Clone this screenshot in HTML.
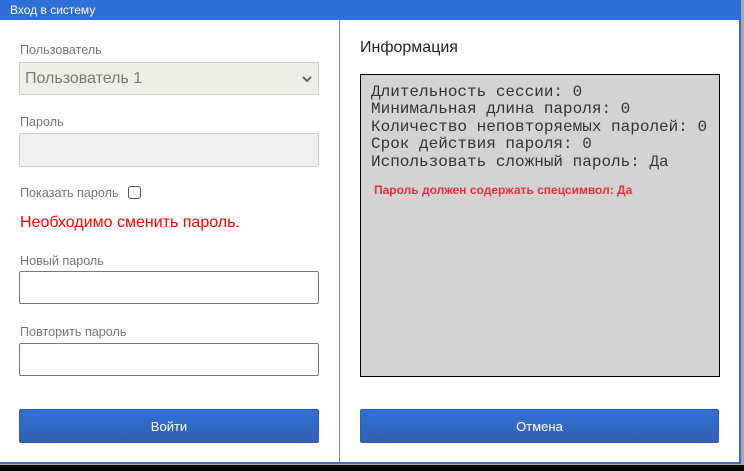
<!DOCTYPE html>
<html><head><meta charset="utf-8"><style>
*{margin:0;padding:0;box-sizing:border-box}
body{width:744px;height:471px;background:#000;position:relative;overflow:hidden;font-family:"Liberation Sans",sans-serif}
.gray{position:absolute;left:0;top:0;width:744px;height:465px;background:#a9a9b0}
.win{position:absolute;left:0;top:0;width:741px;height:464px;background:#fff;border-right:2px solid #2f6fd3;border-bottom:2px solid #3a6ec4}
.hdr{position:absolute;left:0;top:0;width:741px;height:20px;background:#2d6fd6;color:#fff;font-size:12px;line-height:20px;padding-left:10px}
.div{position:absolute;left:339px;top:20px;width:1px;height:442px;background:#888}
.a{position:absolute}
.lbl{font-size:12.6px;color:#777}
.inp{position:absolute;left:19px;width:300px;height:33px;border:1px solid #777;border-radius:2px;background:#fff}
.btn{position:absolute;height:34px;border-radius:2px;background:linear-gradient(#2f70d6,#3460b0);color:#fff;font-size:13px;text-align:center;line-height:34px;border:1px solid #2d5fb8}
.box{position:absolute;left:360px;top:74px;width:360px;height:303px;background:#d3d3d3;border:1px solid #000;padding:9px 0 0 10px}
.mono{font-family:"Liberation Mono",monospace;font-size:16px;line-height:17.4px;color:#333;white-space:pre;letter-spacing:0}
</style></head><body>
<div class="gray"></div>
<div class="win"></div>
<div class="hdr">Вход в систему</div>
<div class="div"></div>
<div class="a lbl" style="left:20px;top:43px">Пользователь</div>
<div class="a" style="left:19px;top:62px;width:300px;height:33px;background:#efefea;border:1px solid #ccc;font-size:16px;color:#777;line-height:31px;padding-left:5px">Пользователь 1
<svg style="position:absolute;right:6px;top:12px" width="10" height="8" viewBox="0 0 10 8"><path d="M1 2l4 4 4-4" stroke="#666" stroke-width="2" fill="none"/></svg></div>
<div class="a lbl" style="left:20px;top:115px">Пароль</div>
<div class="a" style="left:19px;top:133px;width:300px;height:34px;background:#f0f0f0;border:1px solid #ccc;border-radius:2px"></div>
<div class="a lbl" style="left:20px;top:186px">Показать пароль</div>
<div class="a" style="left:128px;top:186px;width:13px;height:13px;border:1px solid #555;border-radius:3px"></div>
<div class="a" style="left:20px;top:214px;font-size:16px;color:#f00">Необходимо сменить пароль.</div>
<div class="a lbl" style="left:20px;top:254px">Новый пароль</div>
<div class="inp" style="top:271px"></div>
<div class="a lbl" style="left:20px;top:325px">Повторить пароль</div>
<div class="inp" style="top:343px"></div>
<div class="btn" style="left:19px;top:409px;width:300px">Войти</div>
<div class="a" style="left:360px;top:39px;font-size:16px;color:#222">Информация</div>
<div class="box"><div class="mono">Длительность сессии: 0
Минимальная длина пароля: 0
Количество неповторяемых паролей: 0
Срок действия пароля: 0
Использовать сложный пароль: Да</div>
<div style="font-size:12px;font-weight:bold;color:#e8303a;margin-top:12px;padding-left:3px">Пароль должен содержать спецсимвол: Да</div></div>
<div class="btn" style="left:360px;top:409px;width:359px">Отмена</div>
</body></html>
